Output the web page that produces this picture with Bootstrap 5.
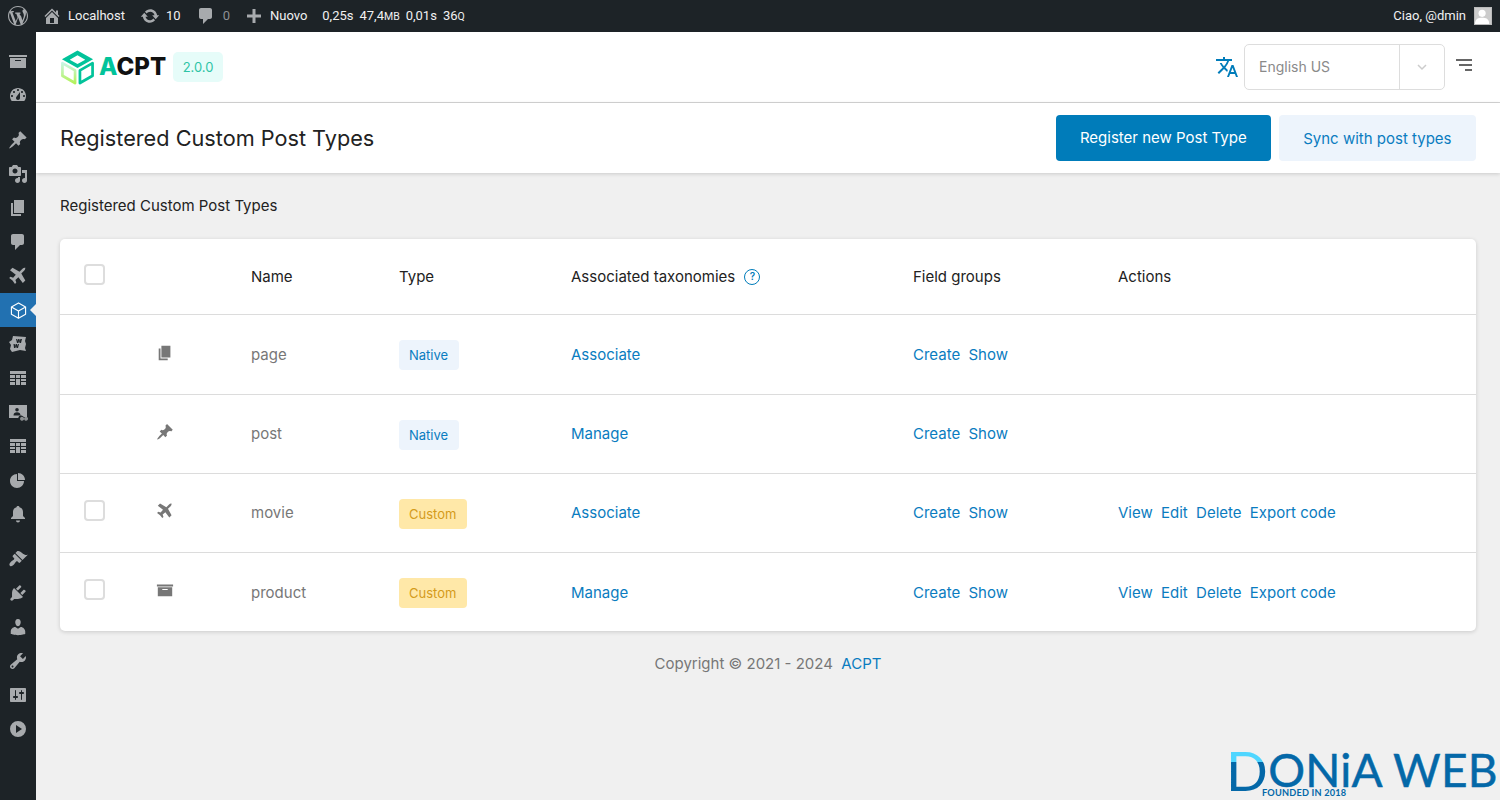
<!doctype html>
<html lang="it">
<head>
<meta charset="utf-8">
<title>ACPT</title>
<link href="https://cdn.jsdelivr.net/npm/bootstrap@5.3.0/dist/css/bootstrap.min.css" rel="stylesheet">
<style>
html,body{height:800px;overflow:hidden}
body{font-family:"Inter","Liberation Sans",sans-serif;background:#f0f0f0;color:#1d2327;font-size:15px}
.wp-bar{height:32px;background:#1d2327;color:#f0f0f1;font:13px/32px "Roboto","Liberation Sans",sans-serif}
.wp-bar svg{fill:#a7aaad;display:block}
.bar-item{display:flex;align-items:center;height:32px}
.bar-wp{width:36px;justify-content:center}
.bar-home{margin-left:6px}
.bar-sep{margin-left:6px}
.bar-home-t{margin-right:15px}
.bar-update-t{margin-right:15px}
.bar-zero{color:#8c8f94;margin-left:7px;margin-right:14px}
.bar-stats{margin-left:15px;gap:6px}
.bar-stats small{font-size:10.5px}
.bar-avatar{width:18px;height:18px;background:#ccc;margin-left:8px;margin-right:8px;border:1px solid #bbb;overflow:hidden}
.bar-avatar svg{fill:#fff}
.app-shell{height:768px}
.wp-menu{width:36px;background:#1d2327;padding-top:12px;flex:none}
.wp-menu-item{height:34px;display:flex;align-items:center;justify-content:center;position:relative}
.wp-menu-item svg{width:20px;height:20px;fill:#a7aaad;display:block}
.wp-menu-gap{margin-top:11px}
.wp-menu-on{background:#2271b1}
.wp-menu-on svg{fill:none;stroke:#fff;width:17px;height:17px}
.wp-menu-on::after{content:"";position:absolute;right:0;top:11px;border:6px solid transparent;border-right-color:#f0f0f0;border-left:0}
.main-col{flex:1;min-width:0;position:relative}
.top-head{height:71px;background:#fff;border-bottom:1px solid #d5d5d5;padding:0 24px}
.brand-name{font-family:"Inter",sans-serif;font-weight:800;font-size:24px;color:#111;line-height:1;margin-left:4px}
.brand-name b{color:#02c39a;font-weight:800}
.ver-tag{background:#e6fcf9;color:#2ec4a6;border-radius:5px;font-size:13px;padding:7px 9.5px;margin-left:7px;line-height:16px}
.lang-box{width:201px;height:46px;border:1px solid #ddd;border-radius:5px;margin-left:5px;color:#8a8a8a}
.lang-val{flex:1;padding:0 0 2px 14px;font-size:14px}
.lang-arrow{width:45px;height:100%;border-left:1px solid #ddd}
.burger{margin-left:11px;margin-right:4px;margin-top:-3px}
.sub-head{height:70px;background:#fff;padding:0 24px;box-shadow:0 1px 4px rgba(0,0,0,.16);position:relative}
.page-title{font-size:21.7px;font-weight:400;margin:0;color:#222}
.act-main,.act-soft{height:46px;font-size:15px;border-radius:4px;border:0;padding:0 24px;font-weight:400}
.act-main{background:#007cba;color:#fff}
.act-soft{background:#edf4fc;color:#0a7cc0;margin-left:8px;padding:2px 24.5px 0}
.crumb-line{padding:0 24px;margin:23px 0 23px;line-height:20px;color:#222}
.type-card{margin:0 24px;background:#fff;border-radius:5px;box-shadow:0 1px 4px rgba(0,0,0,.16);overflow:hidden}
.type-table{table-layout:fixed;width:100%;margin:0;font-size:15px}
.type-table th,.type-table td{padding:2px 0 0 24px;vertical-align:middle;border-bottom:1px solid #dcdcdc;font-weight:400;background:transparent}
.type-table tr:last-child td{border-bottom:0}
.type-table thead tr{height:75px}
.type-table tbody tr{height:79px}
.type-table tbody tr.first-row{height:80px}
.type-table th{color:#222}
.type-table td{color:#777}
.type-table .form-check-input{width:21px;height:21px;margin:0;border:2px solid #ddd;border-radius:4px;display:block;float:none;position:relative;top:-3px}
.type-table a,.foot-line a{color:#0a7cc0;text-decoration:none}
.link-set a{margin-right:8.3px}
.type-icon{width:18px;height:18px;fill:#777;display:block;margin:-5px 0 0 -1px}
.pill-n,.pill-c{display:inline-block;font-size:13px;line-height:16px;padding:7px 10.5px 7px 10px;border-radius:4px}
.pill-n{background:#edf4fc;color:#0a7cc0}
.pill-c{background:#ffe8a8;color:#d49b1b}
.help-dot{display:inline-block;width:16px;height:16px;border:1.5px solid #007cba;border-radius:50%;color:#007cba;font-size:10px;line-height:13px;text-align:center;margin-left:5px;vertical-align:2px;font-weight:600}
.foot-line{text-align:center;margin-top:22px;color:#777;line-height:20px;padding-top:1px}
.donia{position:absolute;right:6px;bottom:2px;color:#0468a8;line-height:1;white-space:nowrap;text-align:left}
.donia-word{font:400 46px/36px "Lato","Liberation Sans",sans-serif;letter-spacing:.3px;display:block;width:268px;margin-left:-4px;-webkit-text-stroke:.5px #0468a8}
.donia-d{font-size:55px;vertical-align:-4px;-webkit-text-stroke:0;background:linear-gradient(#4fd6ff 0 38%,#0468a8 38%);-webkit-background-clip:text;background-clip:text;color:transparent}
.donia-sub{font:700 9.2px/10px "Lato",sans-serif;display:block;margin-left:32px;letter-spacing:.2px}
</style>
</head>
<body>
<svg width="0" height="0" class="d-block position-absolute">
<defs>
<symbol id="i-archive" viewBox="0 0 20 20"><path d="M19 4v2H1V4h18zM2 7h16v10H2V7zm11 3V9H7v1h6z" fill-rule="evenodd"/></symbol>
<symbol id="i-dash" viewBox="0 0 20 20"><path d="M3.76 16h12.48c1.1-1.37 1.76-3.11 1.76-5 0-4.42-3.58-8-8-8s-8 3.58-8 8c0 1.89.66 3.63 1.76 5zM10 4c.55 0 1 .45 1 1s-.45 1-1 1-1-.45-1-1 .45-1 1-1zM6 6c.55 0 1 .45 1 1s-.45 1-1 1-1-.45-1-1 .45-1 1-1zm8 0c.55 0 1 .45 1 1s-.45 1-1 1-1-.45-1-1 .45-1 1-1zm-5.37 5.55L12 7v6c0 1.1-.9 2-2 2s-2-.9-2-2c0-.57.24-1.08.63-1.45zM4 10c.55 0 1 .45 1 1s-.45 1-1 1-1-.45-1-1 .45-1 1-1zm12 0c.55 0 1 .45 1 1s-.45 1-1 1-1-.45-1-1 .45-1 1-1z"/></symbol>
<symbol id="i-pin" viewBox="0 0 20 20"><path d="M10.44 3.02l1.82-1.82 6.36 6.35-1.83 1.82c-1.05-.68-2.48-.57-3.41.36l-.75.75c-.92.93-1.04 2.35-.35 3.41l-1.83 1.82-2.41-2.41-2.8 2.79c-.42.42-3.38 2.71-3.8 2.29s1.86-3.39 2.28-3.81l2.79-2.79L4.1 9.36l1.83-1.82c1.05.69 2.48.57 3.4-.36l.75-.75c.93-.92 1.05-2.35.36-3.41z"/></symbol>
<symbol id="i-media" viewBox="0 0 20 20"><path d="M13 11V4c0-.55-.45-1-1-1h-1.67L9 1H5L3.67 3H2c-.55 0-1 .45-1 1v7c0 .55.45 1 1 1h10c.55 0 1-.45 1-1zM7 4.5c1.38 0 2.5 1.12 2.5 2.5S8.38 9.5 7 9.5 4.5 8.38 4.5 7 5.62 4.5 7 4.5zM14 6h5v10.5c0 1.38-1.12 2.5-2.5 2.5S14 17.88 14 16.5s1.12-2.5 2.5-2.5c.17 0 .34.02.5.05V9h-3V6zm-4 8.05V13h2v3.5c0 1.38-1.12 2.5-2.5 2.5S7 17.88 7 16.5 8.12 14 9.5 14c.17 0 .34.02.5.05z"/></symbol>
<symbol id="i-page" viewBox="0 0 20 20"><path d="M6 15V2h10v13H6zm-1 1h8v2H3V5h2v11z"/></symbol>
<symbol id="i-comment" viewBox="0 0 20 20"><path d="M5 2h9c1.1 0 2 .9 2 2v7c0 1.1-.9 2-2 2h-2l-5 5v-5H5c-1.1 0-2-.9-2-2V4c0-1.1.9-2 2-2z"/></symbol>
<symbol id="i-plane" viewBox="0 0 20 20"><path d="M17.800 2.200c-.8-.8-2.400-.3-3.300.6L11.500 5.800 4.500 1.800 2 4.300l5.800 4.400-2.700 3-2.600-.9-1.300 1.300 3.300 2.500 2.500 3.300 1.300-1.300-.9-2.600 3-2.700 4.400 5.800 2.500-2.500-4-7 3-3c.9-.9 1.400-2.500.6-3.300z"/></symbol>
<symbol id="i-table" viewBox="0 0 20 20"><path d="M2 3h16v3H2zM2 7h5v3H2zM8 7h4v3H8zM13 7h5v3h-5zM2 11h5v2H2zM8 11h4v6H8zM13 11h5v2h-5zM2 14h5v3H2zM13 14h5v3h-5z"/></symbol>
<symbol id="i-pie" viewBox="0 0 20 20"><path d="M10 10V3c3.87 0 7 3.13 7 7h-7zM9 4v7h7c0 3.87-3.13 7-7 7s-7-3.13-7-7 3.13-7 7-7z"/></symbol>
<symbol id="i-bell" viewBox="0 0 20 20"><path d="M10 2c.8 0 1.4.5 1.500 1.200 2.300.6 3.500 2.400 3.500 4.800v4l2 2v1H3v-1l2-2V8c0-2.400 1.200-4.200 3.500-4.800C8.600 2.500 9.200 2 10 2zm-2 14.500h4c0 1.100-.9 2-2 2s-2-.9-2-2z"/></symbol>
<symbol id="i-brush" viewBox="0 0 20 20"><path d="M14.500 11 7.400 4l1.500-1.500c.5-.6 2.300-.5 3.500.3 1.200.8 1.400 1.300 2.900 2.100 1.200.6 2.500 1.300 4.500.9zM13.800 11.800 6.700 4.700 4.900 6.500c-.4.4-.4 1 0 1.400l1.100 1.100c.4.4.4 1 0 1.400-.6.6-1.400 1.100-2.200 1.700-.4.3-.7.5-1 .8-1.400 1.400-1.900 2.800-.9 3.800s2.400.5 3.800-.9c.3-.3.5-.7.8-1 .6-.8 1.100-1.600 1.700-2.200.4-.4 1-.4 1.400 0l1 1c.4.4 1 .4 1.400 0z"/></symbol>
<symbol id="i-plug" viewBox="0 0 20 20"><path d="M13.110 4.360L9.870 7.600 8 5.730l3.240-3.240c.35-.34 1.050-.2 1.560.32.52.51.66 1.210.31 1.550zm-8 1.770l.91-1.120 9.010 9.010-1.190.84c-.71.71-2.630 1.160-3.820 1.160H6.140L4.900 17.260c-.59.59-1.540.59-2.120 0-.59-.58-.59-1.530 0-2.120l1.240-1.240v-3.880c0-1.130.4-3.190 1.090-3.890zm7.260 3.970l3.240-3.240c.34-.35 1.040-.21 1.550.31.52.51.66 1.210.31 1.550l-3.240 3.250z"/></symbol>
<symbol id="i-user" viewBox="0 0 20 20"><path d="M10 9.250c-2.270 0-2.730-3.440-2.730-3.440C7 4.020 7.820 2 9.970 2c2.160 0 2.980 2.020 2.710 3.810 0 0-.41 3.440-2.680 3.440zm0 2.570L12.720 10c2.390 0 4.520 2.330 4.520 4.530v2.490s-3.650 1.130-7.240 1.130c-3.650 0-7.240-1.130-7.240-1.130v-2.490c0-2.250 1.940-4.480 4.470-4.480z"/></symbol>
<symbol id="i-tool" viewBox="0 0 20 20"><path fill-rule="evenodd" d="M16.680 9.770c-1.340 1.340-3.300 1.670-4.950.99l-5.410 6.520c-.99.99-2.590.99-3.580 0s-.99-2.590 0-3.570l6.520-5.420c-.68-1.650-.35-3.610.99-4.950 1.280-1.280 3.120-1.620 4.720-1.060l-2.890 2.890 2.820 2.820 2.860-2.870c.53 1.580.18 3.390-1.080 4.650zM3.810 16.210c.4.39 1.040.39 1.430 0 .4-.4.4-1.040 0-1.430-.39-.4-1.030-.4-1.430 0-.39.39-.39 1.030 0 1.430z"/></symbol>
<symbol id="i-sliders" viewBox="0 0 20 20"><path fill-rule="evenodd" d="M18 16V4c0-.55-.45-1-1-1H3c-.55 0-1 .45-1 1v12c0 .55.45 1 1 1h14c.55 0 1-.45 1-1zM8 11h1c.55 0 1 .45 1 1s-.45 1-1 1H8v1.500c0 .28-.22.5-.5.5s-.5-.22-.5-.5V13H6c-.55 0-1-.45-1-1s.45-1 1-1h1V5.500c0-.28.22-.5.5-.5s.5.22.5.5V11zm5-2h-1c-.55 0-1-.45-1-1s.45-1 1-1h1V5.500c0-.28.22-.5.5-.5s.5.22.5.5V7h1c.55 0 1 .45 1 1s-.45 1-1 1h-1v5.500c0 .28-.22.5-.5.5s-.5-.22-.5-.5V9z"/></symbol>
<symbol id="i-play" viewBox="0 0 20 20"><path fill-rule="evenodd" d="M10 2a8 8 0 1 0 0 16 8 8 0 0 0 0-16zM8 6l6 4-6 4z"/></symbol>
<symbol id="i-wp" viewBox="0 0 20 20"><path fill-rule="evenodd" d="M20 10c0-5.510-4.490-10-10-10C4.480 0 0 4.490 0 10c0 5.520 4.480 10 10 10 5.510 0 10-4.480 10-10zM7.780 15.370L4.370 6.220c.55-.02 1.170-.08 1.170-.08.5-.06.44-1.130-.06-1.110 0 0-1.450.11-2.370.11-.18 0-.37 0-.58-.01C4.120 2.690 6.870 1.110 10 1.110c2.330 0 4.450.87 6.050 2.340-.68-.11-1.650.39-1.650 1.580 0 .74.45 1.360.9 2.100.35.61.55 1.360.55 2.460 0 1.490-1.400 5-1.400 5l-1.210-4.060-1.820-2.640c.54-.02.82-.17.82-.17.5-.05.44-1.250-.06-1.220 0 0-1.440.12-2.380.12-.87 0-2.330-.12-2.330-.12-.5-.03-.56 1.200-.06 1.220l.92.08 1.260 3.410zM17.410 10c.24-.64.74-1.870.43-4.250.7 1.290 1.050 2.710 1.050 4.250 0 3.290-1.730 6.240-4.400 7.780.97-2.590 1.940-5.200 2.920-7.780zM6.100 18.090C3.120 16.650 1.110 13.530 1.110 10c0-1.300.23-2.480.72-3.590C3.250 10.300 4.670 14.200 6.100 18.090zm4.030-6.630l2.580 6.980c-.86.29-1.760.45-2.710.45-.79 0-1.570-.11-2.290-.33.81-2.380 1.620-4.740 2.420-7.100z"/></symbol>
<symbol id="i-home" viewBox="0 0 20 20"><path fill-rule="evenodd" d="M16 8.500l1.530 1.530-1.060 1.060L10 4.620l-6.470 6.470-1.060-1.060L10 2.500l4 4v-2h2v4zm-6-2.460l6 5.990V18H4v-5.970zM12 17v-5H8v5h4z"/></symbol>
<symbol id="i-update" viewBox="0 0 20 20"><path d="M10.200 3.280c3.530 0 6.430 2.610 6.920 6h2.080l-3.500 4-3.500-4h2.320c-.45-1.970-2.210-3.450-4.320-3.450-1.450 0-2.730.71-3.540 1.780L4.950 5.660C6.230 4.200 8.110 3.280 10.200 3.280zm-.4 13.440c-3.520 0-6.430-2.610-6.920-6H.8l3.500-4c1.170 1.330 2.330 2.670 3.500 4H5.480c.45 1.970 2.210 3.450 4.320 3.450 1.450 0 2.730-.71 3.540-1.780l1.710 1.950c-1.280 1.460-3.150 2.380-5.250 2.380z"/></symbol>
<symbol id="i-plus" viewBox="0 0 20 20"><path d="M17 8.500h-5.500V3h-3v5.500H3v3h5.500V17h3v-5.500H17z"/></symbol>
<symbol id="i-gallery" viewBox="0 0 20 20"><path d="M5 2l13 1-1 4 1 3-1 4 1 3-6-1-8 2-2-3 1-4-2-3 3-2z"/><path fill="#1d2327" d="M8 5h1.200l.5 2 .5-2h1.200l.5 2 .5-2H14l-1 4h-1.400l-.6-2-.6 2H9zM5.500 10h1.200l.5 2 .5-2h1.200l.5 2 .5-2H11l-1 4H8.600l-.6-2-.6 2H6z"/></symbol>
<symbol id="i-screen" viewBox="0 0 20 20"><path fill-rule="evenodd" d="M1 3h18v12h-3.200a3 3 0 0 0-5.600 1H1zM9 6a1.800 1.800 0 1 0 0 3.600A1.800 1.800 0 0 0 9 6zm-3.500 7.500h7c0-2-1.400-3.200-3.500-3.200s-3.500 1.200-3.500 3.200z"/><path d="M13 15a2 2 0 1 1 0 3.400 2 2 0 0 1 0-3.400zm4 0a2 2 0 1 1 0 3.400 2 2 0 0 1 0-3.400z" opacity=".8"/></symbol>
<symbol id="i-cube" viewBox="0 0 36 36"><path d="M18 2 33 10.500 18 19 3 10.500zM3 10.500V26l15 8.500V19M33 10.500V26l-15 8.500" stroke-width="2.400" stroke-linejoin="round" fill="none"/></symbol>
<linearGradient id="cube-fade" x1="0" y1="0" x2="0" y2="1"><stop offset="0" stop-color="#c8f5e4"/><stop offset="1" stop-color="#b4f25b"/></linearGradient>
</defs>
</svg>

<header class="wp-bar d-flex justify-content-between">
  <div class="d-flex">
    <div class="bar-item bar-wp"><svg width="20" height="20"><use href="#i-wp"/></svg></div>
    <div class="bar-item bar-home"><svg width="20" height="20"><use href="#i-home"/></svg><span class="bar-sep bar-home-t">Localhost</span></div>
    <div class="bar-item"><svg width="20" height="20"><use href="#i-update"/></svg><span class="bar-sep bar-update-t">10</span></div>
    <div class="bar-item"><svg width="20" height="20"><use href="#i-comment"/></svg><span class="bar-zero">0</span></div>
    <div class="bar-item"><svg width="20" height="20"><use href="#i-plus"/></svg><span class="bar-sep">Nuovo</span></div>
    <div class="bar-item bar-stats"><span>0,25s</span><span>47,4<small>MB</small></span><span>0,01s</span><span>36<small>Q</small></span></div>
  </div>
  <div class="bar-item">
    <span>Ciao, @dmin</span>
    <span class="bar-avatar"><svg viewBox="0 0 18 18" width="16" height="16"><circle cx="8" cy="6" r="4"/><path d="M0 18c0-6 4-7 8-7s8 1 8 7z"/></svg></span>
  </div>
</header>

<div class="app-shell d-flex">
  <nav class="wp-menu" aria-label="Menu">
    <div class="wp-menu-item"><svg><use href="#i-archive"/></svg></div>
    <div class="wp-menu-item"><svg><use href="#i-dash"/></svg></div>
    <div class="wp-menu-item wp-menu-gap"><svg><use href="#i-pin"/></svg></div>
    <div class="wp-menu-item"><svg><use href="#i-media"/></svg></div>
    <div class="wp-menu-item"><svg><use href="#i-page"/></svg></div>
    <div class="wp-menu-item"><svg><use href="#i-comment"/></svg></div>
    <div class="wp-menu-item"><svg><use href="#i-plane"/></svg></div>
    <div class="wp-menu-item wp-menu-on"><svg><use href="#i-cube"/></svg></div>
    <div class="wp-menu-item"><svg><use href="#i-gallery"/></svg></div>
    <div class="wp-menu-item"><svg><use href="#i-table"/></svg></div>
    <div class="wp-menu-item"><svg><use href="#i-screen"/></svg></div>
    <div class="wp-menu-item"><svg><use href="#i-table"/></svg></div>
    <div class="wp-menu-item"><svg><use href="#i-pie"/></svg></div>
    <div class="wp-menu-item"><svg><use href="#i-bell"/></svg></div>
    <div class="wp-menu-gap wp-menu-item"><svg><use href="#i-brush"/></svg></div>
    <div class="wp-menu-item"><svg><use href="#i-plug"/></svg></div>
    <div class="wp-menu-item"><svg><use href="#i-user"/></svg></div>
    <div class="wp-menu-item"><svg><use href="#i-tool"/></svg></div>
    <div class="wp-menu-item"><svg><use href="#i-sliders"/></svg></div>
    <div class="wp-menu-item"><svg><use href="#i-play"/></svg></div>
  </nav>

  <main class="main-col">
    <div class="top-head d-flex align-items-center justify-content-between">
      <div class="d-flex align-items-center">
        <svg width="35" height="36" viewBox="0 0 36 36" fill="none">
          <path d="M2.500 14V27L15.500 34.500V21.500Z" stroke="url(#cube-fade)" stroke-width="2.800" stroke-linejoin="round"/>
          <path d="M33.500 14V27L20.500 34.500V21.500Z" stroke="#02c39a" stroke-width="2.800" stroke-linejoin="round"/>
          <path d="M18 1 34 10 18 19 2 10ZM18 6 26 10.500 18 15 10 10.500Z" fill="#02c39a" fill-rule="evenodd"/>
        </svg>
        <span class="brand-name"><b>A</b>CPT</span>
        <span class="ver-tag">2.0.0</span>
      </div>
      <div class="d-flex align-items-center">
        <svg width="24" height="24" viewBox="0 0 24 24" fill="#007cba"><path d="M12.870 15.070l-2.540-2.510.030-.030A17.520 17.520 0 0 0 14.070 6H17V4h-7V2H8v2H1v1.990h11.170C11.500 7.920 10.440 9.750 9 11.350 8.070 10.320 7.300 9.190 6.690 8h-2c.73 1.630 1.730 3.170 2.980 4.560l-5.090 5.020L4 19l5-5 3.110 3.110.76-2.040zM18.500 10h-2L12 22h2l1.120-3h4.750L21 22h2l-4.500-12zm-2.620 7l1.620-4.330L19.120 17h-3.240z"/></svg>
        <div class="lang-box d-flex align-items-center">
          <div class="lang-val">English US</div>
          <div class="lang-arrow d-flex align-items-center justify-content-center">
            <svg width="12" height="8" viewBox="0 0 12 8" fill="none" stroke="#ccc" stroke-width="1.500"><path d="M2 2l4 4 4-4"/></svg>
          </div>
        </div>
        <div class="burger" aria-hidden="true"><svg width="16" height="13" viewBox="0 0 16 13" fill="#666" class="d-block"><path d="M0 0h16v2H0zM3 5h13v2H3zM9 10h7v2H9z"/></svg></div>
      </div>
    </div>

    <div class="sub-head d-flex align-items-center justify-content-between">
      <h1 class="page-title">Registered Custom Post Types</h1>
      <div class="d-flex">
        <button class="btn act-main" type="button">Register new Post Type</button>
        <button class="btn act-soft" type="button">Sync with post types</button>
      </div>
    </div>

    <div class="crumb-line">Registered Custom Post Types</div>

    <div class="type-card">
      <table class="table type-table">
        <colgroup><col style="width:73px"><col style="width:94px"><col style="width:148px"><col style="width:172px"><col style="width:342px"><col style="width:205px"><col></colgroup>
        <thead>
          <tr>
            <th><input class="form-check-input" type="checkbox" aria-label="Select all"></th>
            <th></th>
            <th>Name</th>
            <th>Type</th>
            <th>Associated taxonomies <span class="help-dot">?</span></th>
            <th>Field groups</th>
            <th>Actions</th>
          </tr>
        </thead>
        <tbody>
          <tr class="first-row">
            <td></td>
            <td><svg class="type-icon"><use href="#i-page"/></svg></td>
            <td>page</td>
            <td><span class="pill-n">Native</span></td>
            <td><a href="#">Associate</a></td>
            <td class="link-set"><a href="#">Create</a><a href="#">Show</a></td>
            <td></td>
          </tr>
          <tr>
            <td></td>
            <td><svg class="type-icon"><use href="#i-pin"/></svg></td>
            <td>post</td>
            <td><span class="pill-n">Native</span></td>
            <td><a href="#">Manage</a></td>
            <td class="link-set"><a href="#">Create</a><a href="#">Show</a></td>
            <td></td>
          </tr>
          <tr>
            <td><input class="form-check-input" type="checkbox" aria-label="Select movie"></td>
            <td><svg class="type-icon"><use href="#i-plane"/></svg></td>
            <td>movie</td>
            <td><span class="pill-c">Custom</span></td>
            <td><a href="#">Associate</a></td>
            <td class="link-set"><a href="#">Create</a><a href="#">Show</a></td>
            <td class="link-set"><a href="#">View</a><a href="#">Edit</a><a href="#">Delete</a><a href="#">Export code</a></td>
          </tr>
          <tr>
            <td><input class="form-check-input" type="checkbox" aria-label="Select product"></td>
            <td><svg class="type-icon"><use href="#i-archive"/></svg></td>
            <td>product</td>
            <td><span class="pill-c">Custom</span></td>
            <td><a href="#">Manage</a></td>
            <td class="link-set"><a href="#">Create</a><a href="#">Show</a></td>
            <td class="link-set"><a href="#">View</a><a href="#">Edit</a><a href="#">Delete</a><a href="#">Export code</a></td>
          </tr>
        </tbody>
      </table>
    </div>

    <div class="foot-line">Copyright © 2021 - 2024 &nbsp;<a href="#">ACPT</a></div>

    <div class="donia">
      <span class="donia-word"><span class="donia-d">D</span>ONiA WEB</span>
      <span class="donia-sub">FOUNDED IN 2018</span>
    </div>
  </main>
</div>
<script src="https://cdn.jsdelivr.net/npm/bootstrap@5.3.0/dist/js/bootstrap.bundle.min.js"></script>
</body>
</html>
